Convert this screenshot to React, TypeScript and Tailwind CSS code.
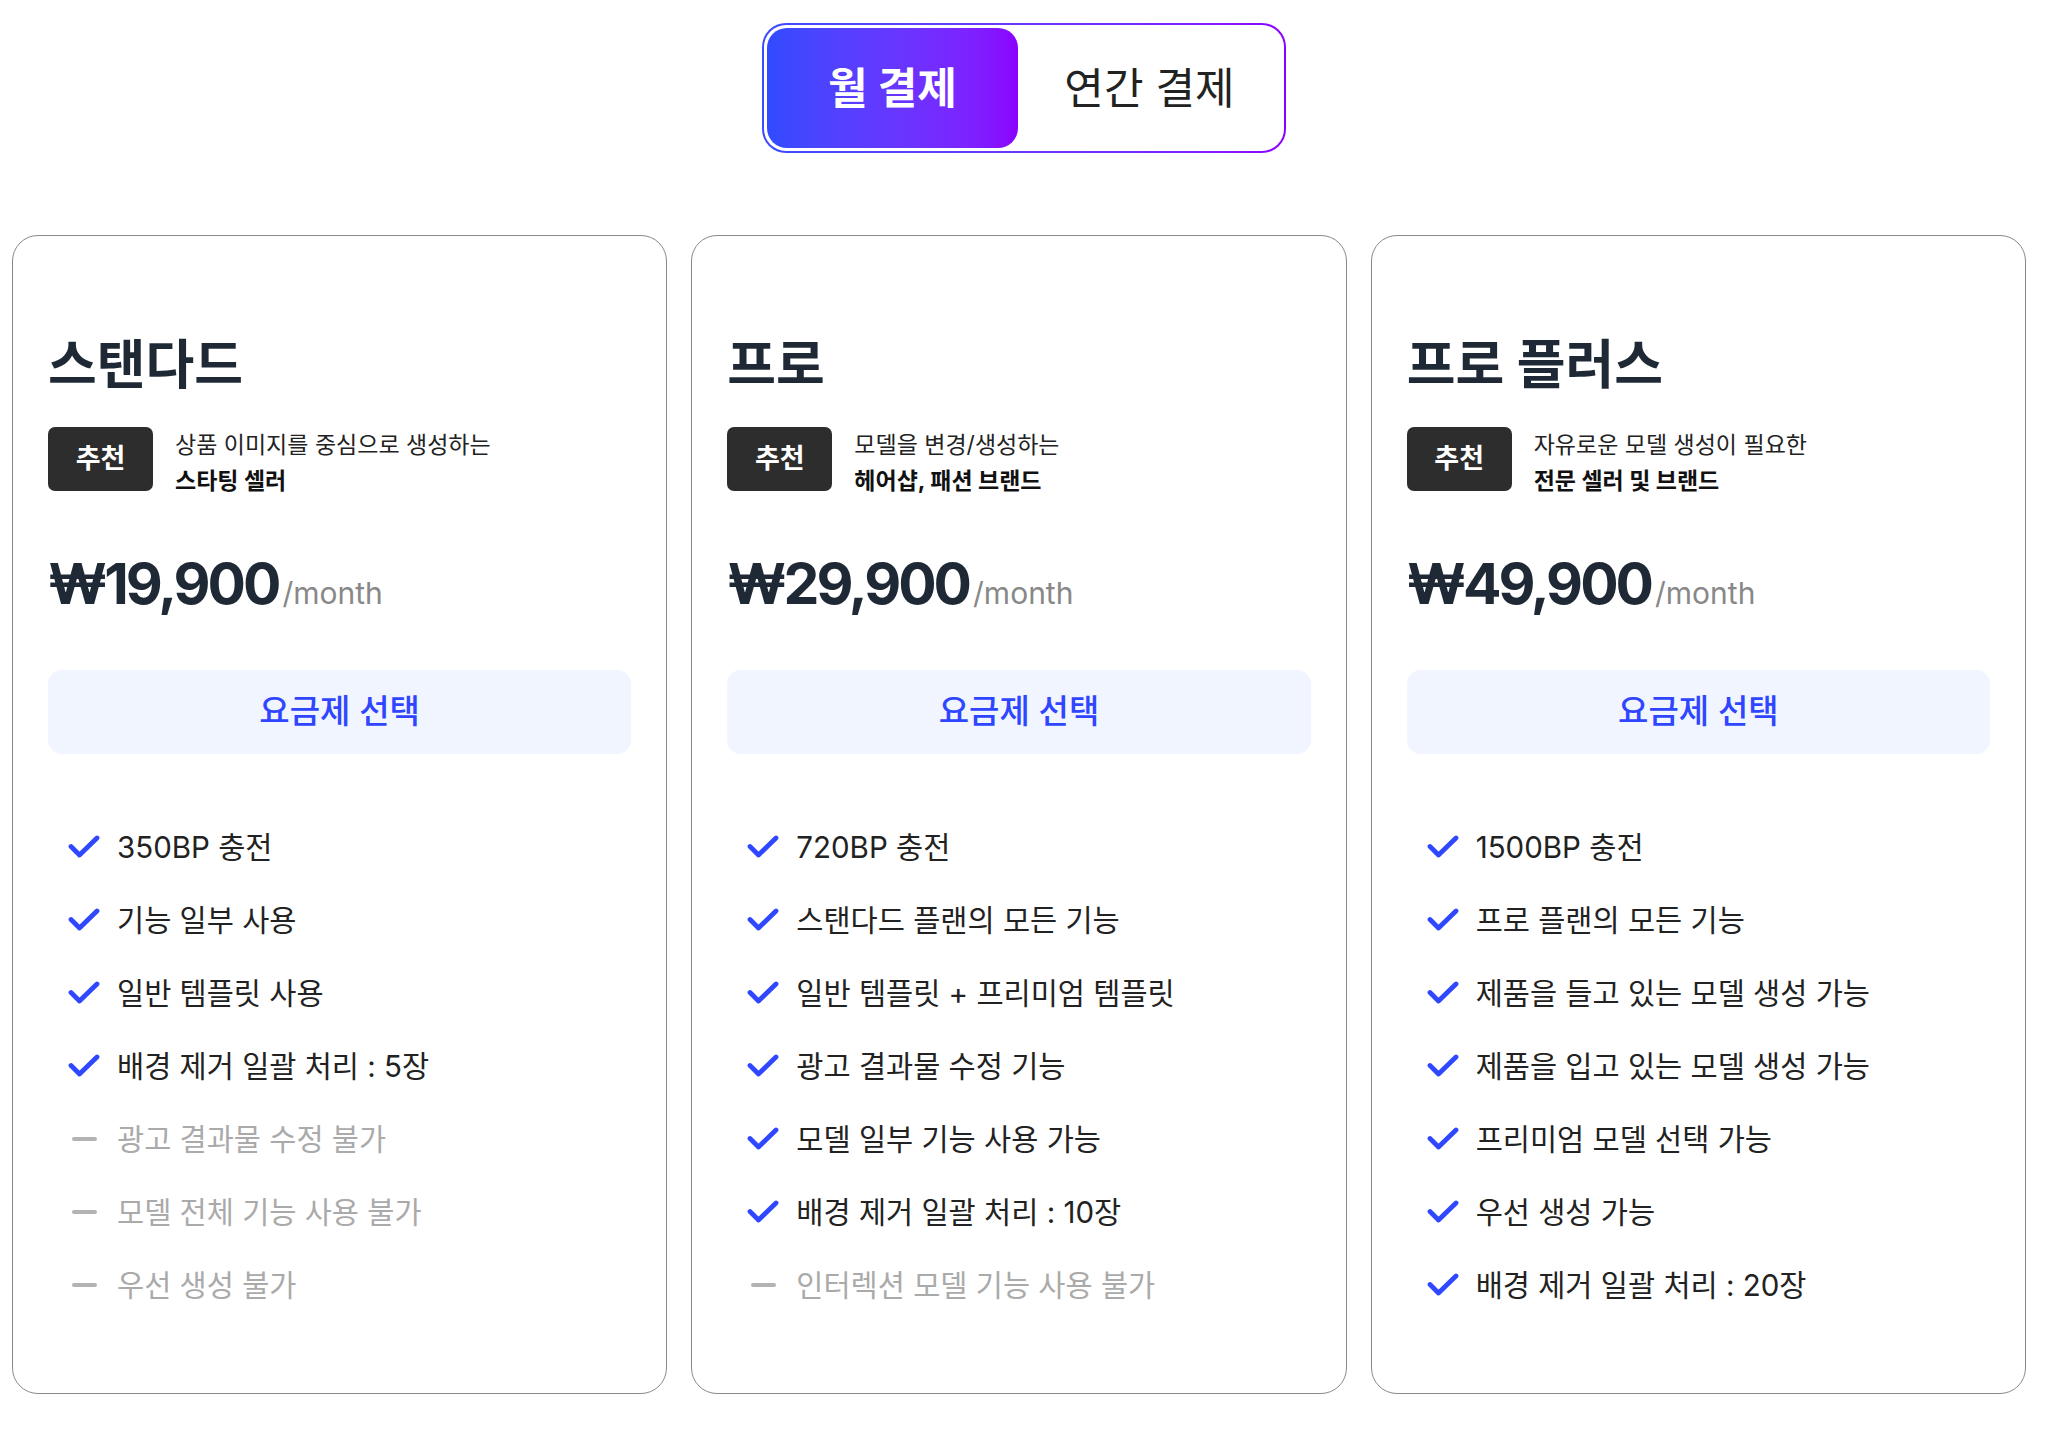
import React from "react";

type Feature = { text: string; ok: boolean };
type Plan = {
  name: string;
  desc1: string;
  desc2: string;
  price: string;
  features: Feature[];
};

const plans: Plan[] = [
  {
    name: "스탠다드",
    desc1: "상품 이미지를 중심으로 생성하는",
    desc2: "스타팅 셀러",
    price: "₩19,900",
    features: [
      { text: "350BP 충전", ok: true },
      { text: "기능 일부 사용", ok: true },
      { text: "일반 템플릿 사용", ok: true },
      { text: "배경 제거 일괄 처리 : 5장", ok: true },
      { text: "광고 결과물 수정 불가", ok: false },
      { text: "모델 전체 기능 사용 불가", ok: false },
      { text: "우선 생성 불가", ok: false },
    ],
  },
  {
    name: "프로",
    desc1: "모델을 변경/생성하는",
    desc2: "헤어샵, 패션 브랜드",
    price: "₩29,900",
    features: [
      { text: "720BP 충전", ok: true },
      { text: "스탠다드 플랜의 모든 기능", ok: true },
      { text: "일반 템플릿 + 프리미엄 템플릿", ok: true },
      { text: "광고 결과물 수정 기능", ok: true },
      { text: "모델 일부 기능 사용 가능", ok: true },
      { text: "배경 제거 일괄 처리 : 10장", ok: true },
      { text: "인터렉션 모델 기능 사용 불가", ok: false },
    ],
  },
  {
    name: "프로 플러스",
    desc1: "자유로운 모델 생성이 필요한",
    desc2: "전문 셀러 및 브랜드",
    price: "₩49,900",
    features: [
      { text: "1500BP 충전", ok: true },
      { text: "프로 플랜의 모든 기능", ok: true },
      { text: "제품을 들고 있는 모델 생성 가능", ok: true },
      { text: "제품을 입고 있는 모델 생성 가능", ok: true },
      { text: "프리미엄 모델 선택 가능", ok: true },
      { text: "우선 생성 가능", ok: true },
      { text: "배경 제거 일괄 처리 : 20장", ok: true },
    ],
  },
];

function Check() {
  return (
    <svg width="32" height="24" viewBox="0 0 32 24" fill="none">
      <polyline
        points="3,11.5 11.5,20 29,3"
        stroke="#2f48ff"
        strokeWidth="4.8"
        strokeLinecap="round"
        strokeLinejoin="round"
      />
    </svg>
  );
}

function Dash() {
  return <div className="w-[25px] h-[4px] rounded-full bg-[#b3b3b3]" />;
}

function PlanCard({ plan }: { plan: Plan }) {
  return (
    <div className="rounded-[26px] border border-[#8a8a8a] bg-white pt-[100px] pb-[88px] px-[35px] flex flex-col">
      <h2 className="text-[53px] leading-[58px] font-bold text-[#1f2935]">
        {plan.name}
      </h2>
      <div className="mt-[33px] flex items-start gap-[22px]">
        <div className="w-[105px] h-[64px] shrink-0 rounded-[7px] bg-[#2d2d2d] text-white font-bold text-[27px] flex items-center justify-center">
          추천
        </div>
        <div className="text-[23px] leading-[36px] text-[#222]">
          <div>{plan.desc1}</div>
          <div className="font-bold text-[#111]">{plan.desc2}</div>
        </div>
      </div>
      <div className="mt-[56px] flex items-baseline">
        <span className="text-[57px] leading-none font-bold text-[#1f2935] tracking-[-3px]">
          {plan.price}
        </span>
        <span className="text-[30px] leading-none text-[#888] ml-[4px]">/month</span>
      </div>
      <button className="mt-[58px] h-[84px] w-full rounded-[14px] bg-[#f0f5ff] text-[#2f45ff] text-[33px] font-medium">
        요금제 선택
      </button>
      <ul className="mt-[73px] pl-[20px] flex flex-col gap-[33px]">
        {plan.features.map((f, i) => (
          <li key={i} className="h-[40px] flex items-center gap-[17px]">
            <div className="w-[32px] flex items-center justify-center">
              {f.ok ? <Check /> : <Dash />}
            </div>
            <span className={"text-[29.5px] " + (f.ok ? "text-[#222]" : "text-[#aaaaaa]")}>
              {f.text}
            </span>
          </li>
        ))}
      </ul>
    </div>
  );
}

export default function App() {
  return (
    <div
      className="w-[2048px] min-h-[1429px] bg-white"
      style={{ fontFamily: 'Inter, "Noto Sans CJK KR", sans-serif' }}
    >
      <div className="pt-[23px] flex justify-center">
        <div className="w-[524px] h-[130px] rounded-[24px] p-[2px] bg-gradient-to-r from-[#3a4bff] to-[#8b00ff]">
          <div className="w-full h-full rounded-[22px] bg-white p-[3px] grid grid-cols-[251px_1fr]">
            <button className="rounded-[20px] bg-gradient-to-r from-[#2f4bff] to-[#8a00ff] text-white text-[43px] font-bold">
              월 결제
            </button>
            <button className="text-[#222] text-[43px]">연간 결제</button>
          </div>
        </div>
      </div>
      <div className="mt-[82px] ml-[12px] w-[2014px] grid grid-cols-3 gap-[24px]">
        {plans.map((p) => (
          <PlanCard key={p.name} plan={p} />
        ))}
      </div>
    </div>
  );
}
